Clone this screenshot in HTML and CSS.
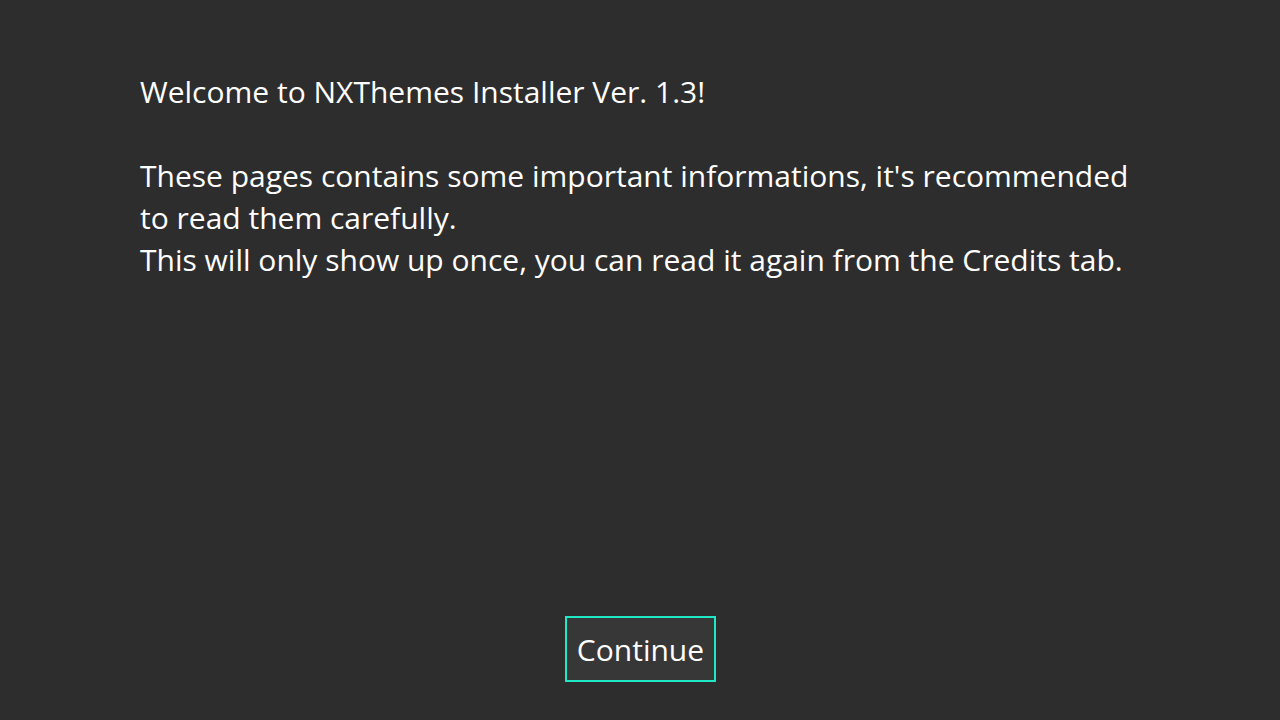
FILE: index.html
```html
<!DOCTYPE html>
<html>
<head>
<meta charset="utf-8">
<link rel="stylesheet" href="styles.css">
</head>
<body>
<div class="screen">
  <p class="message">Welcome to NXThemes Installer Ver. 1.3!<br><br>These pages contains some important informations, it's recommended to read them carefully.<br>This will only show up once, you can read it again from the Credits tab.</p>
  <div class="actions">
    <button class="btn">Continue</button>
  </div>
</div>
</body>
</html>
```
FILE: styles.css
```css
html, body {
  margin: 0;
  padding: 0;
  background: #2d2d2d;
}
.screen {
  width: 1280px;
  height: 720px;
  box-sizing: border-box;
  display: flex;
  flex-direction: column;
  padding: 71px 140px 38px 140px;
  font-family: "Open Sans", sans-serif;
  color: #ffffff;
}
.message {
  margin: 0;
  font-size: 30px;
  line-height: 42px;
  flex: 1;
  width: 1000px;
}
.actions {
  display: flex;
  justify-content: center;
  padding-left: 1px;
}
.btn {
  font-family: "Open Sans", sans-serif;
  font-size: 30px;
  color: #ffffff;
  background: #373737;
  border: 2px solid #1ee8c5;
  box-sizing: border-box;
  width: 151px;
  height: 66px;
  padding: 0;
  cursor: pointer;
}
```
